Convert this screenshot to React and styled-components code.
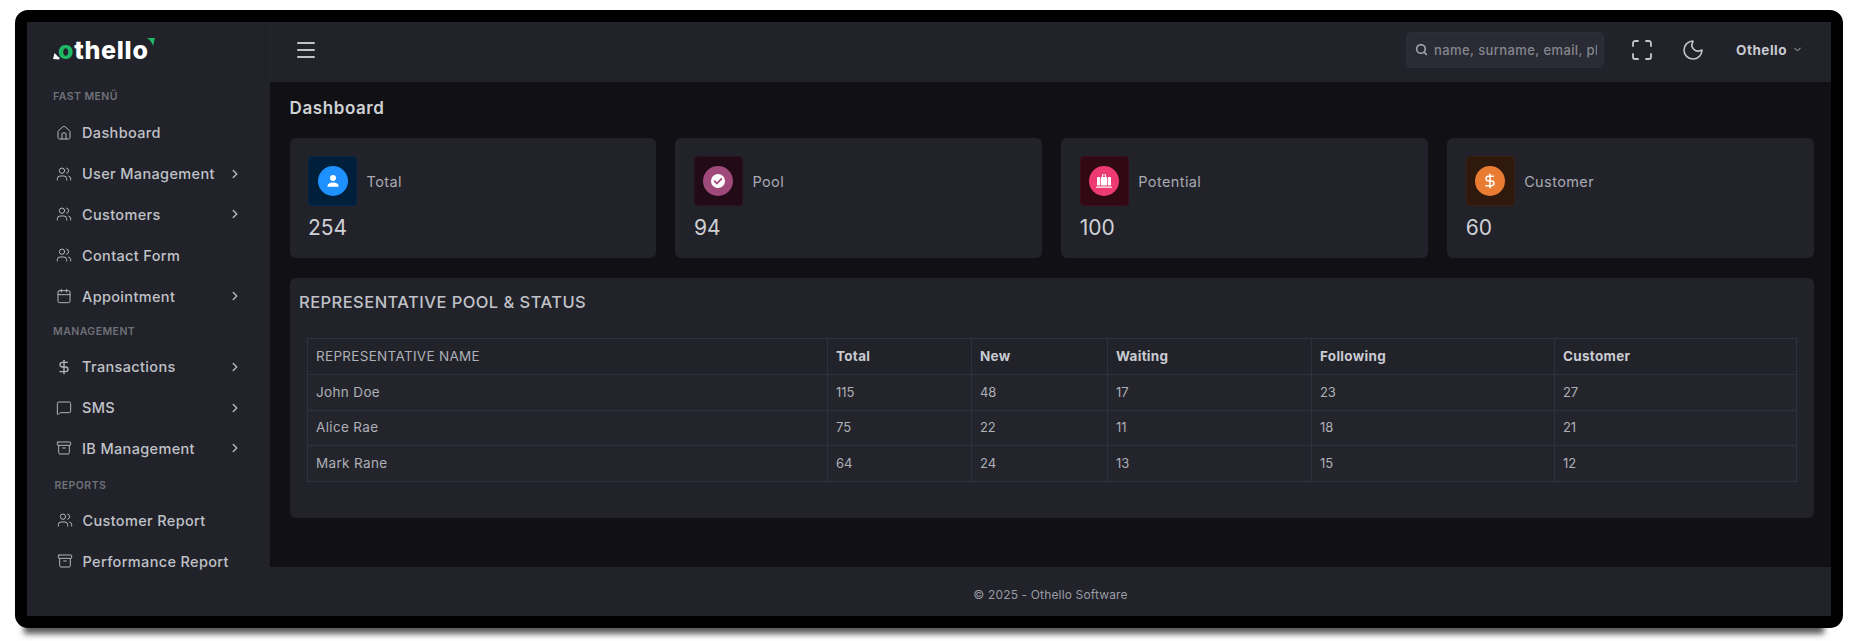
import React from 'react';
import styled, { createGlobalStyle } from 'styled-components';
import {
	Archive,
	Calendar,
	ChevronDown,
	ChevronRight,
	DollarSign,
	House,
	Maximize,
	Menu,
	MessageSquare,
	Moon,
	Search,
	Users
} from 'lucide-react';

const sections = [
	{
		title: 'Fast Menü',
		top: 0,
		bottom: 8.5,
		items: [
			{ label: 'Dashboard', icon: House },
			{ label: 'User Management', icon: Users, more: true },
			{ label: 'Customers', icon: Users, more: true },
			{ label: 'Contact Form', icon: Users },
			{ label: 'Appointment', icon: Calendar, more: true }
		]
	},
	{
		title: 'Management',
		top: 8.7,
		bottom: 7.3,
		items: [
			{ label: 'Transactions', icon: DollarSign, bold: true, more: true },
			{ label: 'SMS', icon: MessageSquare, more: true },
			{ label: 'IB Management', icon: Archive, more: true }
		]
	},
	{
		title: 'Reports',
		top: 9.9,
		bottom: 7.3,
		inset: 1.5,
		items: [
			{ label: 'Customer Report', icon: Users },
			{ label: 'Performance Report', icon: Archive }
		]
	}
];

const UserGlyph = () => (
	<svg width='16' height='16' viewBox='0 0 16 16' fill='#fff'>
		<circle cx='8' cy='5' r='3' />
		<path d='M2.5 13.2c0-2.4 2.4-3.7 5.500-3.700s5.500 1.300 5.500 3.700c0 .4-.3.6-.7.6H3.200c-.4 0-.7-.2-.7-.6z' />
	</svg>
);

const CheckGlyph = () => (
	<svg width='18' height='18' viewBox='0 0 18 18'>
		<circle cx='9' cy='9' r='7' fill='#fff' />
		<path d='M5.600 9.200l2.400 2.300 4.400-4.600' fill='none' stroke='#a04a7c' strokeWidth='1.800' strokeLinecap='round' strokeLinejoin='round' />
	</svg>
);

const BagGlyph = () => (
	<svg width='18' height='18' viewBox='0 0 18 18' fill='#fff'>
		<rect x='2' y='5' width='3.300' height='8.500' rx='.8' />
		<path d='M6 13.500V5h1V3.200c0-.5.400-.9.900-.9h2.200c.5 0 .9.400.9.900V5h1v8.500H6zM8 5h2V3.300H8V5z' />
		<rect x='12.700' y='5' width='3.300' height='8.500' rx='.8' />
		<rect x='1' y='14.500' width='16' height='1.200' rx='.4' />
	</svg>
);

const stats = [
	{ label: 'Total', value: 254, box: '#001f3a', line: '#01284a', dot: '#1e90ff', glyph: <UserGlyph /> },
	{ label: 'Pool', value: 94, box: '#220b17', line: '#2b101e', dot: '#a04a7c', glyph: <CheckGlyph /> },
	{ label: 'Potential', value: 100, box: '#300915', line: '#3c0d1c', dot: '#ee3a72', glyph: <BagGlyph /> },
	{
		label: 'Customer',
		value: 60,
		box: '#2e190c',
		line: '#3a2010',
		dot: '#ea7b33',
		glyph: <DollarSign size={16} color='#fff' strokeWidth={2.2} />
	}
];

const columns = [
	{ label: 'REPRESENTATIVE NAME', width: 520 },
	{ label: 'Total', width: 144, bold: true },
	{ label: 'New', width: 136, bold: true },
	{ label: 'Waiting', width: 204, bold: true },
	{ label: 'Following', width: 243, bold: true },
	{ label: 'Customer', width: 242, bold: true }
];

const rows = [
	['John Doe', 115, 48, 17, 23, 27],
	['Alice Rae', 75, 22, 11, 18, 21],
	['Mark Rane', 64, 24, 13, 15, 12]
];

const App = () => {
	return (
		<>
			<GlobalStyle />
			<Frame>
				<Sidebar>
					<Logo>
						<LogoText>
							<LogoO>o</LogoO>thello
						</LogoText>
						<LogoMarks width='104' height='30' viewBox='0 0 104 30'>
							<path d='M0 23l1.500-6 2.500 2.500c.8 1 1.500 1.800 2.800 2.300L6 23.500z' fill='#fff' />
							<path d='M94 2h8l-2 8c-1-3.500-3-6-6-8z' fill='#1fb866' />
						</LogoMarks>
					</Logo>
					{sections.map((section) => (
						<section key={section.title}>
							<SectionTitle $top={section.top} $bottom={section.bottom} $inset={section.inset}>
								{section.title}
							</SectionTitle>
							{section.items.map((item) => (
								<NavItem key={item.label} $inset={section.inset}>
									<item.icon size={16} strokeWidth={item.bold ? 2 : 1.5} />
									<span>{item.label}</span>
									{item.more && (
										<Chevron>
											<ChevronRight size={14} strokeWidth={2.5} />
										</Chevron>
									)}
								</NavItem>
							))}
						</section>
					))}
				</Sidebar>
				<Content>
					<TopBar>
						<MenuButton>
							<Menu size={24} strokeWidth={2} />
						</MenuButton>
						<SearchBox>
							<Search size={13} strokeWidth={3} />
							<input placeholder='name, surname, email, phone' />
						</SearchBox>
						<IconButton>
							<Maximize size={24} strokeWidth={1.8} />
						</IconButton>
						<IconButton>
							<Moon size={24} strokeWidth={1.6} />
						</IconButton>
						<Account>
							Othello <ChevronDown size={11} strokeWidth={2} />
						</Account>
					</TopBar>
					<Main>
						<PageTitle>Dashboard</PageTitle>
						<StatGrid>
							{stats.map((stat) => (
								<StatCard key={stat.label}>
									<StatHead>
										<IconBox $box={stat.box} $line={stat.line}>
											<IconDot $dot={stat.dot}>{stat.glyph}</IconDot>
										</IconBox>
										<StatLabel>{stat.label}</StatLabel>
									</StatHead>
									<StatValue>{stat.value}</StatValue>
								</StatCard>
							))}
						</StatGrid>
						<Panel>
							<PanelTitle>REPRESENTATIVE POOL &amp; STATUS</PanelTitle>
							<Table>
								<colgroup>
									{columns.map((col) => (
										<Col key={col.label} $width={col.width} />
									))}
								</colgroup>
								<thead>
									<tr>
										{columns.map((col) => (
											<HeadCell key={col.label} $bold={col.bold}>
												{col.label}
											</HeadCell>
										))}
									</tr>
								</thead>
								<tbody>
									{rows.map((row) => (
										<tr key={row[0]}>
											{row.map((cell, i) => (
												<Cell key={i} $number={i > 0}>
													{cell}
												</Cell>
											))}
										</tr>
									))}
								</tbody>
							</Table>
						</Panel>
					</Main>
					<Footer>© 2025 - Othello Software</Footer>
				</Content>
			</Frame>
		</>
	);
};

export default App;

const GlobalStyle = createGlobalStyle`
	html, body {
		margin: 0;
		background: #fff;
	}
	body {
		padding: 10px 16px 13px 15px;
		font-family: Inter, 'Noto Sans', sans-serif;
		color: #c0c2c8;
		overflow: hidden;
	}
	* {
		box-sizing: border-box;
	}
`;

const Frame = styled.div`
	display: grid;
	grid-template-columns: 243px 1fr;
	height: 618px;
	border: 12px solid #000;
	border-radius: 13px;
	background: #21222a;
	box-shadow: -5px 20px 6px -14px rgba(0, 0, 0, 0.65);
`;

const Sidebar = styled.aside`
	background: #21222a;
	padding-top: 68px;
	position: relative;
`;

const Logo = styled.div`
	position: absolute;
	left: 26px;
	top: 14px;
	width: 104px;
	height: 30px;
`;

const LogoText = styled.div`
	padding-left: 5px;
	font-size: 25px;
	line-height: 28px;
	font-weight: 800;
	color: #fff;
	letter-spacing: 0.7px;
`;

const LogoO = styled.span`
	color: #1fb866;
`;

const LogoMarks = styled.svg`
	position: absolute;
	left: 0;
	top: 0;
`;

const SectionTitle = styled.div`
	height: 14px;
	margin: ${(p) => p.$top}px 0 ${(p) => p.$bottom}px ${(p) => 26 + (p.$inset || 0)}px;
	font-size: 10.500px;
	line-height: 14px;
	font-weight: 600;
	letter-spacing: 0.45px;
	text-transform: uppercase;
	color: #6f7179;
`;

const NavItem = styled.div`
	display: flex;
	align-items: center;
	height: 40.800px;
	padding-left: ${(p) => 29 + (p.$inset || 0) / 3}px;
	font-size: 14.500px;
	font-weight: 500;
	letter-spacing: 0.35px;
	color: #c0c2c8;
	svg {
		flex: none;
		color: #b4b6bc;
	}
	span {
		margin-left: 10px;
	}
`;

const Chevron = styled.i`
	position: absolute;
	left: 201px;
	display: flex;
`;

const Content = styled.div`
	display: flex;
	flex-direction: column;
	min-width: 0;
`;

const TopBar = styled.header`
	display: flex;
	align-items: center;
	height: 60px;
	padding: 0 28px 5px 0;
	background: #21222a;
	border-left: 1px solid #25262e;
`;

const MenuButton = styled.div`
	display: flex;
	margin: 0 auto 0 23px;
	color: #c0c2c8;
`;

const SearchBox = styled.div`
	display: flex;
	align-items: center;
	gap: 6px;
	width: 198px;
	height: 36px;
	padding: 0 6px 0 8px;
	margin-right: 26px;
	background: #2a2b35;
	border: 1px solid #2e2f39;
	border-radius: 5px;
	color: #a2a4ab;
	svg {
		flex: none;
	}
	input {
		width: 100%;
		min-width: 0;
		padding: 0;
		background: none;
		border: none;
		outline: none;
		font: 500 13px Inter, 'Noto Sans', sans-serif;
		letter-spacing: 0.4px;
		color: #a2a4ab;
	}
	input::placeholder {
		color: #85878e;
		opacity: 1;
	}
`;

const IconButton = styled.div`
	display: flex;
	margin-right: 27px;
	color: #c4c6cb;
`;

const Account = styled.div`
	display: flex;
	align-items: center;
	gap: 5px;
	font-size: 13.500px;
	font-weight: 700;
	letter-spacing: 0.5px;
	color: #c9cbd1;
	margin-left: 4px;
`;

const Main = styled.main`
	flex: 1;
	padding: 0 17px 0 19.500px;
	background: #111115;
`;

const PageTitle = styled.h1`
	height: 56px;
	margin: 0;
	padding-top: 15px;
	font-size: 17px;
	line-height: 22px;
	font-weight: 600;
	letter-spacing: 0.6px;
	color: #cfd1d6;
`;

const StatGrid = styled.div`
	display: grid;
	grid-template-columns: repeat(4, 1fr);
	gap: 19px;
`;

const StatCard = styled.div`
	height: 120px;
	padding: 18px 18.500px;
	background: #21222a;
	border-radius: 6px;
`;

const StatHead = styled.div`
	display: flex;
	align-items: center;
	gap: 9.500px;
`;

const IconBox = styled.div`
	display: flex;
	align-items: center;
	justify-content: center;
	width: 49px;
	height: 50px;
	background: ${(p) => p.$box};
	border: 1px solid ${(p) => p.$line};
	border-radius: 4px;
`;

const IconDot = styled.div`
	display: flex;
	align-items: center;
	justify-content: center;
	width: 30px;
	height: 30px;
	border-radius: 50%;
	background: ${(p) => p.$dot};
`;

const StatLabel = styled.div`
	font-size: 14.500px;
	letter-spacing: 0.4px;
	color: #a9abb2;
`;

const StatValue = styled.div`
	margin-top: 9px;
	font-size: 21px;
	line-height: 26px;
	font-weight: 400;
	color: #cfd1d6;
`;

const Panel = styled.div`
	height: 240px;
	margin-top: 20px;
	padding: 14px 21px 0 17.500px;
	background: #21222a;
	border-radius: 6px;
`;

const PanelTitle = styled.h2`
	height: 46px;
	margin: 0 0 0 -8px;
	font-size: 16.500px;
	line-height: 20px;
	font-weight: 500;
	letter-spacing: 0.45px;
	color: #c0c2c8;
`;

const Table = styled.table`
	width: 100%;
	table-layout: fixed;
	border-collapse: collapse;
	font-size: 13.500px;
`;

const Col = styled.col`
	width: ${(p) => p.$width}px;
`;

const HeadCell = styled.th`
	height: 35.750px;
	padding: 0 8px 1px;
	text-align: left;
	font-weight: ${(p) => (p.$bold ? 700 : 400)};
	letter-spacing: 0.3px;
	color: ${(p) => (p.$bold ? '#c9cbd1' : '#aeb0b6')};
	border: 1px solid #30323b;
`;

const Cell = styled.td`
	height: 35.750px;
	padding: 0 8px 1px;
	font-size: ${(p) => (p.$number ? 13 : 13.5)}px;
	letter-spacing: ${(p) => (p.$number ? -0.1 : 0.35)}px;
	color: #aeb0b6;
	background: #23242c;
	border: 1px solid #30323b;
`;

const Footer = styled.footer`
	height: 49px;
	padding-top: 20px;
	text-align: center;
	font-size: 12px;
	line-height: 16px;
	letter-spacing: 0.15px;
	color: #9a9ca3;
	background: #21222a;
`;
